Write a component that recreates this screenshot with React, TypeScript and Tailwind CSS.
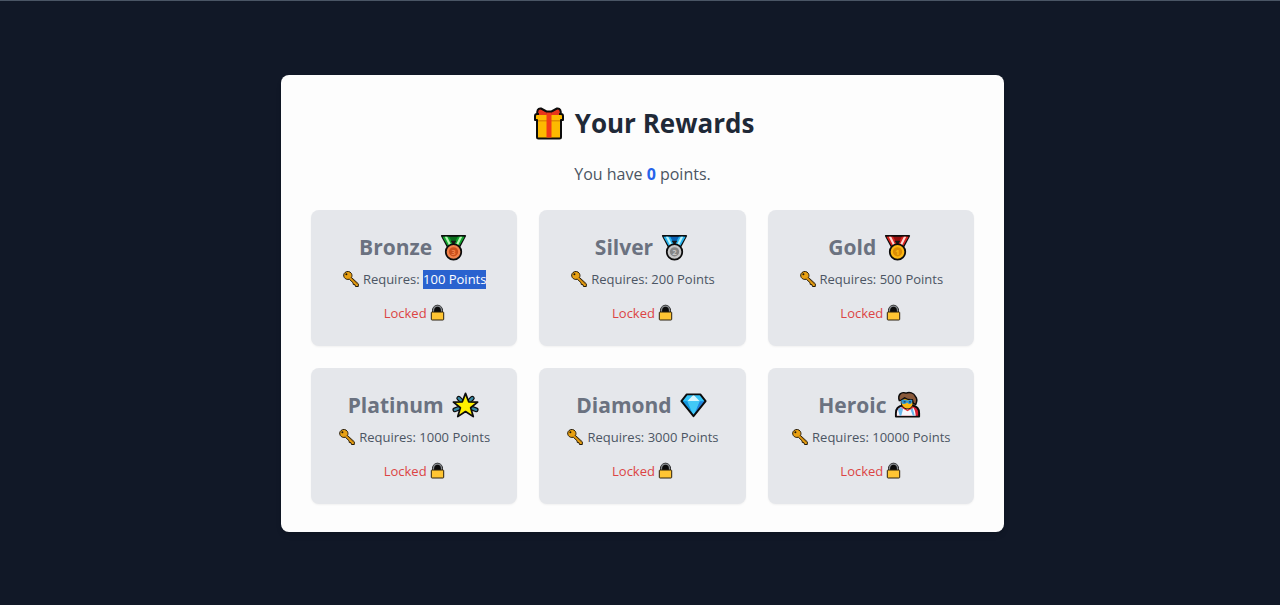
import React from "react";

interface IconProps {
  className?: string;
}

const GiftIcon = ({ className }: IconProps) => (
  <svg viewBox="0 0 36 36" className={className} aria-hidden="true">
    <path d="M6.500 10c-1-4 .5-7 3.500-6.500l5.500 3h5l5.500-3c3-.5 4.500 2.500 3.500 6.500z" fill="#e8341c" stroke="#0c0c0c" strokeWidth="2" strokeLinejoin="round" />
    <path d="M6 9h24a2 2 0 0 1 2 2v4h-2v17a1.500 1.500 0 0 1-1.500 1.500h-21A1.500 1.500 0 0 1 6 32V15H4v-4a2 2 0 0 1 2-2z" fill="#fdb900" stroke="#0c0c0c" strokeWidth="2" strokeLinejoin="round" />
    <path d="M7 15h22v1.500H7z" fill="#e08d00" />
    <path d="M15.500 8h5v24.500h-5z" fill="#f03a17" />
    <path d="M8 10c-.5-3 .5-5 2-5l6 3.500V10zM28 10c.5-3-.5-5-2-5l-6 3.500V10z" fill="#e8341c" />
  </svg>
);

interface MedalProps extends IconProps {
  place: string;
  ribbon: string;
  stripe: string;
  back: string;
  disc: string;
  ring: string;
}

const MedalIcon = ({ className, place, ribbon, stripe, back, disc, ring }: MedalProps) => (
  <svg viewBox="0 -1 31 31" className={className} aria-hidden="true">
    <path d="M3 3h24l-7.500 14h-9z" fill={back} stroke="#0c0c0c" strokeWidth="2" strokeLinejoin="round" />
    <path d="M3.500 4h7l6.500 12h-6.500zM26.500 4h-7L13 16h6.500z" fill={ribbon} />
    <path d="M6 4h2.500l5.500 11h-2.500zM24 4h-2.500L16 15h2.500z" fill={stripe} />
    <path d="M12 8h6l-3 5z" fill="#171717" />
    <circle cx="15" cy="19.500" r="8" fill={disc} stroke="#0c0c0c" strokeWidth="1.800" />
    <circle cx="15" cy="19.500" r="4.800" fill={ring} />
    <text x="15" y="22.500" textAnchor="middle" fontSize="8" fontWeight="700" fontFamily="Open Sans, sans-serif" fill={disc}>
      {place}
    </text>
  </svg>
);

const StarIcon = ({ className }: IconProps) => (
  <svg viewBox="0 -1 31 31" className={className} aria-hidden="true">
    <path d="M8 7.500l3 3M22 7.500l-3 3M4 19.500l5-2M26 19.500l-5-2" stroke="#0c0c0c" strokeWidth="5" strokeLinecap="round" />
    <path d="M8 7.500l3 3M22 7.500l-3 3M4 19.500l5-2M26 19.500l-5-2" stroke="#3789a5" strokeWidth="2.600" strokeLinecap="round" />
    <path d="M15 2.500l3.300 8.700 9.200.3-7.200 5.800 2.700 9.200L15 21.300l-8 5.200 2.700-9.200-7.200-5.800 9.200-.3z" fill="#fff000" stroke="#0c0c0c" strokeWidth="1.800" strokeLinejoin="round" />
  </svg>
);

const GemIcon = ({ className }: IconProps) => (
  <svg viewBox="0 -1 31 31" className={className} aria-hidden="true">
    <path d="M8 3.500h14l5.500 7L15 26 2.500 10.500z" fill="#27b5f2" />
    <path d="M8 3.500L2.500 10.500h6L15 4zM22 3.500l5.500 7h-6L15 4z" fill="#35c5f8" />
    <path d="M15 4l6.500 6.500h-13z" fill="#d4f7ff" />
    <path d="M8.500 10.500h13L15 26z" fill="#41c9f7" />
    <path d="M2.500 10.500h6L15 26z" fill="#1696df" />
    <path d="M21.500 10.500h6L15 26z" fill="#2383dc" />
    <path d="M8 3.500h14l5.500 7L15 26 2.500 10.500z" fill="none" stroke="#0c0c0c" strokeWidth="2" strokeLinejoin="round" />
  </svg>
);

const HeroIcon = ({ className }: IconProps) => (
  <svg viewBox="0 0 31 31" className={className} aria-hidden="true">
    <path d="M3 27.500v-3.500c0-5 3-7.500 7-8h10c4 .5 7 3 7 8v3.500z" fill="#d91f32" stroke="#0c0c0c" strokeWidth="2" strokeLinejoin="round" />
    <path d="M4 26.500v-2.500c0-3.500 2-6 6-7l5 2.500 4.500-2.500c2.500 1.500 3.500 4 4 9.500z" fill="#f7f8fc" />
    <path d="M5 20l3-2.500 2.500 2-2 7H7zM20 17.500l2.500 9h-2L18 20z" fill="#6bb9ed" />
    <path d="M10 16.500l5 4 5-4 1.500 1.500L15 22l-6.500-4z" fill="#ec3437" />
    <path d="M8.500 9h12.500v4c0 3.500-2.500 6.500-6 6.500s-6.500-3-6.500-6.500z" fill="#fbb914" stroke="#0c0c0c" strokeWidth="1" />
    <path d="M6.500 11c-1-3-.5-5.500 1-7 1.500-1.500 4.500-1.500 6-.8 3.500-1.200 8-.4 9.500 3.300 2 2 2 5 .5 8.500l-2.500-1-1-4c-3.500.3-6-.5-8-2L8.500 10.500z" fill="#8a5a3b" stroke="#0c0c0c" strokeWidth="1.500" strokeLinejoin="round" />
    <path d="M8.500 10.500c2-.6 4.500-.4 6.500.3 2-.7 3.500-.9 5-.3-.2 2.800-1 4-3 4-1.200 0-1.700-.7-2.300-1.500-.8.800-1.700 1.500-3.200 1.500-2 0-2.800-1.200-3-4z" fill="#3098d8" />
    <path d="M11 12.200h2M16.500 12.200h2" stroke="#123956" strokeWidth="1.200" />
  </svg>
);

const KeyIcon = ({ className }: IconProps) => (
  <svg viewBox="0 0 18 18" className={className} aria-hidden="true">
    <path d="M3 2.500C5 .8 8 1.300 9.300 3.300c.9 1.500.8 3 .2 4.200l6.800 6.300v2.700h-2.800l-.5-1.800-1.700-.2-.3-1.800-3.700-3.500c-1.900.6-3.900 0-5-1.700C1.300 5.900 1.500 3.800 3 2.500z" fill="#e8a012" stroke="#241a08" strokeWidth="1" strokeLinejoin="round" />
    <circle cx="4.400" cy="4.200" r="1" fill="#1d1608" />
    <path d="M8 7.200l7 6.800" stroke="#a96b0b" strokeWidth=".8" />
  </svg>
);

const LockIcon = ({ className }: IconProps) => (
  <svg viewBox="0 0 15 18" className={className} aria-hidden="true">
    <path d="M2.500 9V6.500C2.500 3.500 4.500 1.200 7.500 1.200s5 2.300 5 5.300V9z" fill="#0a0a0a" stroke="#222" strokeWidth="1" />
    <path d="M3.500 8V6.400c0-2.400 1.500-4.200 4-4.200s4 1.800 4 4.200V8" fill="none" stroke="#85898d" strokeWidth="1.200" />
    <path d="M2 8h11a.7.7 0 0 1 .7.700v6.500a.8.8 0 0 1-.8.800H2.100a.8.8 0 0 1-.8-.8V8.700A.7.7 0 0 1 2 8z" fill="#ffc533" stroke="#2a210e" strokeWidth="1" />
  </svg>
);

interface Reward {
  name: string;
  points: number;
  icon: React.ReactNode;
  selected?: boolean;
}

const iconClass = "h-[30px] w-[30px]";

const rewards: Reward[] = [
  {
    name: "Bronze",
    points: 100,
    icon: <MedalIcon className={iconClass} place="3" ribbon="#11a32d" stripe="#b5f5b4" back="#096b1c" disc="#f2824a" ring="#c9501c" />,
    selected: true,
  },
  {
    name: "Silver",
    points: 200,
    icon: <MedalIcon className={iconClass} place="2" ribbon="#27b2ed" stripe="#b8f4fc" back="#0a62b5" disc="#c6c6c6" ring="#858585" />,
  },
  {
    name: "Gold",
    points: 500,
    icon: <MedalIcon className={iconClass} place="1" ribbon="#d9241f" stripe="#ffd9d4" back="#93100f" disc="#fdb813" ring="#dc8d05" />,
  },
  { name: "Platinum", points: 1000, icon: <StarIcon className={iconClass} /> },
  { name: "Diamond", points: 3000, icon: <GemIcon className={iconClass} /> },
  { name: "Heroic", points: 10000, icon: <HeroIcon className={iconClass} /> },
];

const RewardCard = ({ reward }: { reward: Reward }) => (
  <li className="rounded-lg bg-[#e5e7eb] px-2 pt-[22px] pb-[23px] text-center shadow-xs">
    <h3 className="flex items-center justify-center gap-[7px] text-[21px] leading-[30px] font-bold text-[#6b7280]">
      {reward.name}
      {reward.icon}
    </h3>
    <p className="mt-2 flex items-center justify-center gap-[3px] text-[13px] leading-[19px] text-[#4b5563]">
      <KeyIcon className="h-[18px] w-[18px]" />
      <span>
        Requires:{" "}
        <span className={reward.selected ? "inline-block bg-[#2a62cf] text-white" : ""}>{reward.points} Points</span>
      </span>
    </p>
    <p className="mt-[15px] flex items-center justify-center gap-[3px] text-[13px] leading-[19px] text-[#dc4444]">
      Locked
      <LockIcon className="h-[18px] w-[15px]" />
    </p>
  </li>
);

export const Rewards = () => {
  const points = 0;

  return (
    <div className="flex min-h-screen items-center justify-center border-t border-gray-600 bg-[#111827] pl-[5px] font-['Open_Sans','Noto_Sans',sans-serif]">
      <main className="w-full max-w-[723px] rounded-lg bg-[#fdfdfd] px-[30px] pt-[30px] pb-7 shadow-md">
        <h1 className="flex items-center justify-center gap-2 text-[26px] leading-[36px] font-bold text-[#1f2937]">
          <GiftIcon className="h-[36px] w-[36px]" />
          Your Rewards
        </h1>
        <p className="mt-5 text-center text-[16px] leading-[27px] text-[#4b5563]">
          You have <span className="font-bold text-[#2563eb]">{points}</span> points.
        </p>
        <ul className="mt-[22px] grid grid-cols-1 gap-[22px] sm:grid-cols-3">
          {rewards.map((reward) => (
            <RewardCard key={reward.name} reward={reward} />
          ))}
        </ul>
      </main>
    </div>
  );
};

export default Rewards;
